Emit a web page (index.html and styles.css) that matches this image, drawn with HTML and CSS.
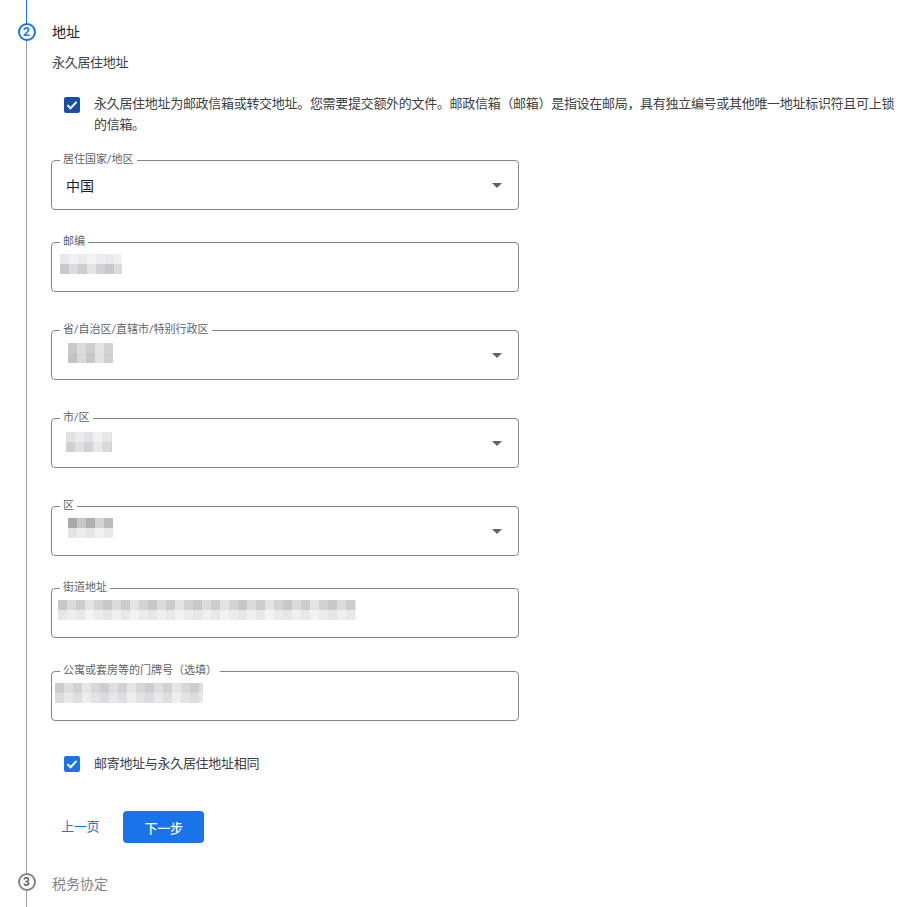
FILE: index.html
```html
<!DOCTYPE html>
<html lang="zh-CN">
<head>
    <meta charset="UTF-8" />
    <meta name="viewport" content="width=device-width, initial-scale=1" />
    <title>地址</title>
    <link rel="stylesheet" href="styles.css">
</head>
<body>
    <div class="stepper">
        <section class="step">
            <div class="rail">
                <span class="seg seg-top seg-done"></span>
                <span class="dot">2</span>
                <span class="seg seg-fill"></span>
            </div>
            <div class="step-body">
                <h2 class="step-title">地址</h2>
                <p class="subtitle">永久居住地址</p>

                <label class="check check-top">
                    <span class="box box-focus">
                        <svg width="16" height="16" viewBox="0 0 16 16"><path d="M3.4 8.1l3.1 3.1 6.1-6.3" fill="none" stroke="#fff" stroke-width="2"/></svg>
                    </span>
                    <span class="check-text">永久居住地址为邮政信箱或转交地址。您需要提交额外的文件。邮政信箱（邮箱）是指设在邮局，具有独立编号或其他唯一地址标识符且可上锁的信箱。</span>
                </label>

                <div class="field field-first">
                    <span class="field-label">居住国家/地区</span>
                    <span class="value">中国</span>
                    <span class="arrow"></span>
                </div>

                <div class="field">
                    <span class="field-label">邮编</span>
                    <span class="mosaic m-zip"></span>
                </div>

                <div class="field field-spaced">
                    <span class="field-label">省/自治区/直辖市/特别行政区</span>
                    <span class="mosaic m-prov"></span>
                    <span class="arrow"></span>
                </div>

                <div class="field field-spaced">
                    <span class="field-label">市/区</span>
                    <span class="mosaic m-city"></span>
                    <span class="arrow"></span>
                </div>

                <div class="field field-spaced">
                    <span class="field-label">区</span>
                    <span class="mosaic m-dist"></span>
                    <span class="arrow"></span>
                </div>

                <div class="field">
                    <span class="field-label">街道地址</span>
                    <span class="mosaic m-street"></span>
                </div>

                <div class="field field-unit">
                    <span class="field-label">公寓或套房等的门牌号（选填）</span>
                    <span class="mosaic m-unit"></span>
                </div>

                <label class="check check-mail">
                    <span class="box box-mail">
                        <svg width="16" height="16" viewBox="0 0 16 16"><path d="M3.4 8.1l3.1 3.1 6.1-6.3" fill="none" stroke="#fff" stroke-width="2"/></svg>
                    </span>
                    <span class="check-text">邮寄地址与永久居住地址相同</span>
                </label>

                <div class="actions">
                    <a class="btn-text" href="#">上一页</a>
                    <button class="btn-primary" type="button">下一步</button>
                </div>
            </div>
        </section>

        <section class="step step-last">
            <div class="rail">
                <span class="seg seg-top3"></span>
                <span class="dot dot-todo">3</span>
                <span class="seg seg-fill"></span>
            </div>
            <div class="step-body">
                <h2 class="step-title step-title-todo">税务协定</h2>
            </div>
        </section>
    </div>
</body>
</html>
```

FILE: styles.css
```css
* { box-sizing: border-box; }

body {
    margin: 0;
    background: #fff;
    font-family: Roboto, "Noto Sans CJK SC", sans-serif;
    font-size: 13px;
    color: #3c4043;
    overflow: hidden;
}

.stepper {
    display: flex;
    flex-direction: column;
    min-height: 907px;
}
.step { display: flex; }
.step-last { flex: 1; }

/* left rail with the step dots */
.rail {
    width: 51px;
    flex: none;
    padding-left: 2px;
    display: flex;
    flex-direction: column;
    align-items: center;
}
.seg { width: 1px; background: #9aa0a6; }
.seg-top { height: 23px; }
.seg-top3 { height: 20px; }
.seg-done { background: #1a73e8; }
.seg-fill { flex: 1; }

.dot {
    flex: none;
    width: 18px;
    height: 18px;
    border-radius: 50%;
    border: 2px solid #1a73e8;
    color: #1a73e8;
    font: 700 12px/14px Roboto, sans-serif;
    text-align: center;
}
.dot-todo { border-color: #80868b; color: #5f6368; }

.step-body { flex: 1; padding-bottom: 10px; }

.step-title {
    margin: 22px 0 0 1px;
    font-size: 14px;
    line-height: 20px;
    font-weight: 400;
    color: #202124;
}
.step-title-todo { margin-top: 21px; color: #80868b; }

.subtitle {
    margin: 11px 0 0 1px;
    line-height: 20px;
    letter-spacing: -0.3px;
}

/* checkboxes */
.check {
    display: flex;
    align-items: flex-start;
    gap: 14px;
    padding-left: 13px;
}
.check-top { margin-top: 20px; }
.check-mail { margin-top: 33px; }
.box {
    flex: none;
    width: 16px;
    height: 16px;
    border-radius: 2px;
    background: #1a73e8;
}
.box svg { display: block; }
.box-focus { background: #174ea6; margin-top: 4px; }
.box-mail { margin-top: 2px; }
.check-text {
    line-height: 21px;
    max-width: 806px;
    letter-spacing: -0.3px;
}
.check-mail .check-text { line-height: 20px; }

/* outlined fields */
.field {
    position: relative;
    width: 468px;
    height: 50px;
    margin-top: 32px;
    padding: 0 16px 0 14px;
    border: 1px solid #80868b;
    border-radius: 4px;
    display: flex;
    align-items: center;
}
.field-first { margin-top: 25px; }
.field-spaced { margin-top: 38px; }
.field-unit { margin-top: 33px; }

.field-label {
    position: absolute;
    left: 8px;
    top: -8px;
    padding: 0 3px;
    background: #fff;
    font-size: 11px;
    line-height: 14px;
    color: #5f6368;
}
.value {
    margin-right: auto;
    font-size: 14px;
    color: #202124;
}
.arrow {
    border-left: 5px solid transparent;
    border-right: 5px solid transparent;
    border-top: 5px solid #5f6368;
}

/* blurred personal data */
.mosaic {
    --top: #d4d4d6;
    --bottom: #e6e6e8;
    height: 20px;
    margin-right: auto;
    background:
        repeating-linear-gradient(90deg, rgba(255,255,255,0) 0 9px, rgba(255,255,255,.35) 9px 18px, rgba(255,255,255,.08) 18px 27px, rgba(255,255,255,.5) 27px 36px, rgba(255,255,255,.2) 36px 45px),
        linear-gradient(var(--top) 0 50%, var(--bottom) 50% 100%);
}
.m-zip { --top: #e9e9eb; --bottom: #c9c9cb; width: 62px; margin-left: -6px; margin-bottom: 7px; }
.m-prov { --top: #c9c9cb; --bottom: #c3c3c5; width: 45px; margin-left: 2px; margin-bottom: 4px; }
.m-city { --top: #e1e1e3; --bottom: #cfcfd1; width: 46px; margin-bottom: 2px; }
.m-dist { --top: #a9a9ab; --bottom: #e4e4e6; width: 45px; margin-left: 2px; margin-bottom: 6px; }
.m-street { --top: #c8c8ca; --bottom: #e6e6e8; width: 298px; margin-left: -8px; margin-bottom: 6px; }
.m-unit { --top: #cdcdcf; --bottom: #dcdcde; width: 148px; margin-left: -11px; margin-bottom: 6px; }

/* buttons */
.actions {
    display: flex;
    align-items: center;
    gap: 16px;
    margin-top: 37px;
}
.btn-text {
    padding: 0 8px 0 10px;
    line-height: 32px;
    color: #1a73e8;
    text-decoration: none;
    letter-spacing: -0.3px;
}
.btn-primary {
    width: 81px;
    height: 32px;
    border: none;
    border-radius: 4px;
    background: #1a73e8;
    color: #fff;
    font: 500 13px Roboto, "Noto Sans CJK SC", sans-serif;
    letter-spacing: -0.3px;
}
```
